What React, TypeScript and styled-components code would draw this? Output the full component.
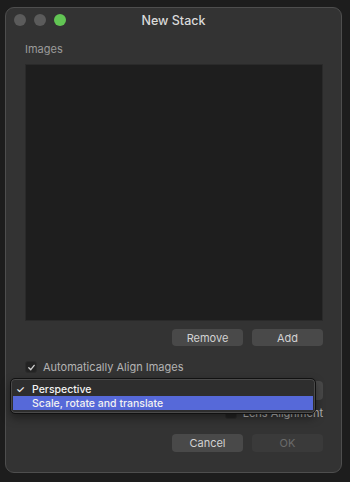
import React from "react";
import styled, { createGlobalStyle } from "styled-components";

const Global = createGlobalStyle`
  html, body { margin: 0; padding: 0; background: #1d1d1d; }
  body { width: 350px; height: 482px; overflow: hidden; font-family: "Inter", "Liberation Sans", Arial, sans-serif; -webkit-font-smoothing: antialiased; }
`;

const Window = styled.div`
  position: relative;
  margin: 7px 0 0 5px;
  width: 337px;
  height: 466px;
  box-sizing: border-box;
  background: #333333;
  border: 1px solid #4e4e4e;
  border-radius: 9px;
  display: flex;
  flex-direction: column;
`;

const TitleBar = styled.div`
  height: 24px;
  display: flex;
  align-items: center;
  position: relative;
  padding-left: 8px;
`;

const Lights = styled.div`
  display: flex;
  gap: 8px;
`;

const Light = styled.span<{ $c: string }>`
  width: 12px;
  height: 12px;
  border-radius: 50%;
  background: ${(p) => p.$c};
`;

const Title = styled.div`
  position: absolute;
  left: 0;
  right: 0;
  text-align: center;
  font-size: 12.5px;
  font-weight: 500;
  color: #dadada;
  pointer-events: none;
`;

const Body = styled.div`
  flex: 1;
  display: flex;
  flex-direction: column;
  padding: 10px 18px 0 19px;
`;

const Label = styled.div`
  font-size: 11px;
  color: #9b9b9b;
  height: 14px;
  line-height: 14px;
`;

const Well = styled.div`
  margin-top: 8px;
  height: 255px;
  background: #1e1e1e;
  border: 1px solid #2a2a2a;
`;

const ButtonRow = styled.div<{ $top?: number }>`
  display: flex;
  justify-content: flex-end;
  gap: 9px;
  margin-top: ${(p) => p.$top ?? 8}px;
`;

const Button = styled.div<{ $disabled?: boolean; $h?: number }>`
  width: 71px;
  height: ${(p) => p.$h ?? 17}px;
  border-radius: 4px;
  background: ${(p) => (p.$disabled ? "#3a3a3a" : "#494949")};
  color: ${(p) => (p.$disabled ? "#6a6a6a" : "#d2d2d2")};
  font-size: 11px;
  display: flex;
  align-items: center;
  justify-content: center;
`;

const CheckRow = styled.div<{ $right?: boolean; $top: number }>`
  display: flex;
  align-items: center;
  gap: 6px;
  font-size: 11px;
  color: #b4b4b4;
  margin-top: ${(p) => p.$top}px;
  justify-content: ${(p) => (p.$right ? "flex-end" : "flex-start")};
`;

const Box = styled.span`
  width: 12px;
  height: 12px;
  border-radius: 3px;
  background: #232323;
  border: 1px solid #2b2b2b;
  box-sizing: border-box;
  display: flex;
  align-items: center;
  justify-content: center;
  color: #cfcfcf;
`;

const PopupButton = styled.div`
  align-self: flex-end;
  width: 100px;
  height: 19px;
  border-radius: 4px;
  background: #484848;
  margin-top: 7px;
`;

const Menu = styled.div`
  position: absolute;
  left: 4px;
  top: 370px;
  width: 306px;
  height: 36px;
  box-sizing: border-box;
  background: #2e2e2e;
  border: 1px solid #111;
  border-radius: 5px;
  box-shadow: 0 0 0 1px #4a4a4a inset, 0 4px 10px rgba(0, 0, 0, 0.4);
  padding: 3px 2px;
  display: flex;
  flex-direction: column;
`;

const MenuItem = styled.div<{ $active?: boolean }>`
  height: 14px;
  display: flex;
  align-items: center;
  font-size: 10.5px;
  font-weight: 500;
  color: #f2f2f2;
  background: ${(p) => (p.$active ? "#5669d9" : "transparent")};
  padding-left: 3px;
`;

const Tick = styled.span`
  width: 16px;
  font-size: 10px;
`;

export default function App() {
  return (
    <>
      <Global />
      <Window>
        <TitleBar>
          <Lights>
            <Light $c="#5b5b5b" />
            <Light $c="#5b5b5b" />
            <Light $c="#62c554" />
          </Lights>
          <Title>New Stack</Title>
        </TitleBar>
        <Body>
          <Label>Images</Label>
          <Well />
          <ButtonRow>
            <Button>Remove</Button>
            <Button>Add</Button>
          </ButtonRow>
          <CheckRow $top={14}>
            <Box>
              <svg width="9" height="9" viewBox="0 0 10 10">
                <path d="M2 5.2 L4.2 7.4 L8 2.6" fill="none" stroke="#cfcfcf" strokeWidth="1.5" strokeLinecap="round" strokeLinejoin="round" />
              </svg>
            </Box>
            Automatically Align Images
          </CheckRow>
          <PopupButton />
          <CheckRow $right $top={6}>
            <Box />
            Lens Alignment
          </CheckRow>
          <ButtonRow $top={14}>
            <Button $h={18}>Cancel</Button>
            <Button $disabled $h={18}>OK</Button>
          </ButtonRow>
        </Body>
        <Menu>
          <MenuItem>
            <Tick>✓</Tick>Perspective
          </MenuItem>
          <MenuItem $active>
            <Tick />Scale, rotate and translate
          </MenuItem>
        </Menu>
      </Window>
    </>
  );
}
